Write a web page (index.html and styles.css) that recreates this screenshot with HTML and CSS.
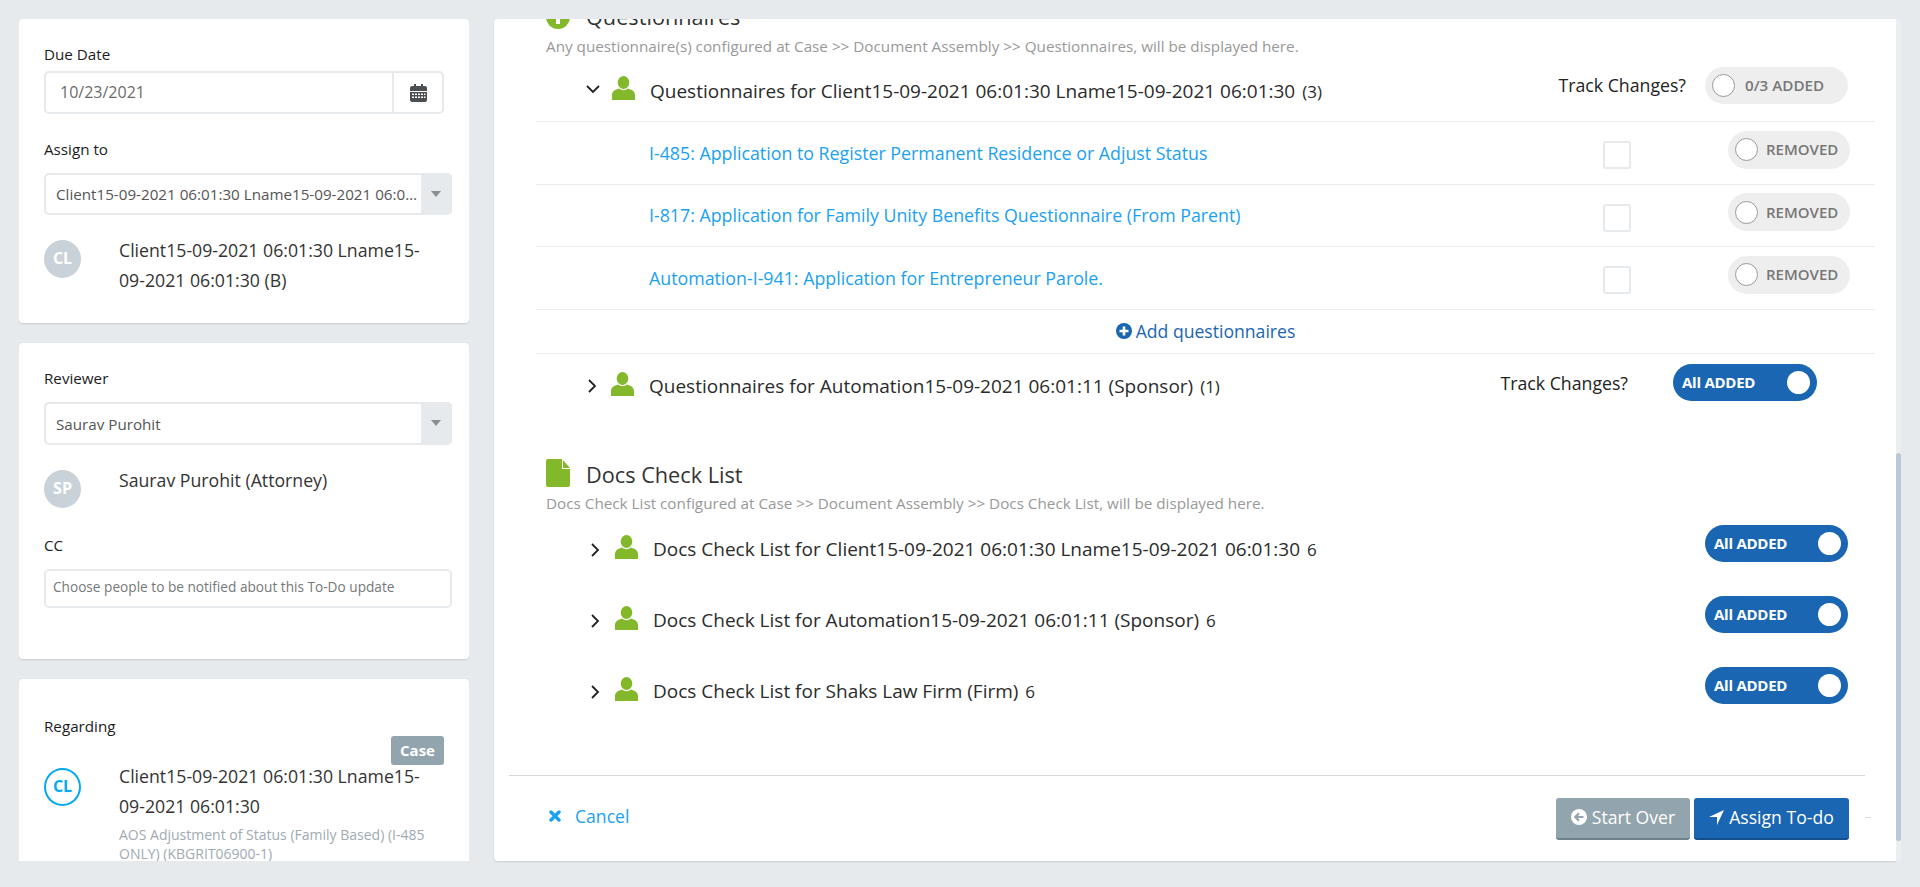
FILE: index.html
```html
<!DOCTYPE html>
<html lang="en">
<head>
<meta charset="utf-8">
<title>Assign To-do</title>
<link rel="stylesheet" href="styles.css">
</head>
<body>
<div class="page">
  <aside class="side">
    <section class="card card-due">
      <label class="label">Due Date</label>
      <div class="date-input">
        <span class="date-value">10/23/2021</span>
        <span class="date-btn">
          <svg width="17" height="18" viewBox="0 0 17 18"><path fill="#4a4f54" d="M2 2h2V0h2v2h5V0h2v2h2a2 2 0 0 1 2 2v3H0V4a2 2 0 0 1 2-2z"/><path fill="#4a4f54" fill-rule="evenodd" d="M0 8h17v8a2 2 0 0 1-2 2H2a2 2 0 0 1-2-2zM2 9.500v1.500h2V9.500zm3 0v1.500h2V9.500zm3 0v1.500h2V9.500zm3 0v1.500h2V9.500zm3 0v1.500h1.500V9.500zM2 12.500V14h2v-1.500zm3 0V14h2v-1.500zm3 0V14h2v-1.500zm3 0V14h2v-1.500zm3 0V14h1.500v-1.500z"/></svg>
        </span>
      </div>
      <label class="label label-assign">Assign to</label>
      <div class="select">
        <span class="select-text">Client15-09-2021 06:01:30 Lname15-09-2021 06:01:30 (B)</span>
        <span class="select-arrow"></span>
      </div>
      <div class="person person-assign">
        <span class="avatar">CL</span>
        <span class="person-name">Client15-09-2021 06:01:30 Lname15-09-2021 06:01:30 (B)</span>
      </div>
    </section>

    <section class="card card-review">
      <label class="label">Reviewer</label>
      <div class="select select-review">
        <span class="select-text">Saurav Purohit</span>
        <span class="select-arrow"></span>
      </div>
      <div class="person person-review">
        <span class="avatar">SP</span>
        <span class="person-name">Saurav Purohit (Attorney)</span>
      </div>
      <label class="label label-cc">CC</label>
      <div class="cc-input">Choose people to be notified about this To-Do update</div>
    </section>

    <section class="card card-regarding">
      <label class="label">Regarding</label>
      <span class="badge">Case</span>
      <div class="person person-regarding">
        <span class="avatar avatar-outline">CL</span>
        <div class="person-body">
          <span class="person-name">Client15-09-2021 06:01:30 Lname15-09-2021 06:01:30</span>
          <p class="person-sub">AOS Adjustment of Status (Family Based) (I-485 ONLY) (KBGRIT06900-1)</p>
        </div>
      </div>
    </section>
  </aside>

  <main class="panel">
    <div class="panel-scroll">
      <div class="content">
        <div class="heading heading-q">
          <svg class="heading-icon" width="24" height="24" viewBox="0 0 24 24"><circle cx="12" cy="12" r="12" fill="#84b82b"/><rect x="10" y="5" width="4" height="14" fill="#fff"/></svg>
          <span>Questionnaires</span>
        </div>
        <p class="sub">Any questionnaire(s) configured at Case &gt;&gt; Document Assembly &gt;&gt; Questionnaires, will be displayed here.</p>

        <div class="row row-open">
          <svg class="chev chev-down" width="14" height="9" viewBox="0 0 14 9"><path d="M1 1l6 6 6-6" fill="none" stroke="#222" stroke-width="1.800"/></svg>
          <svg class="user" width="23" height="24" viewBox="0 0 23 24"><use href="#user"/></svg>
          <span class="row-title">Questionnaires for Client15-09-2021 06:01:30 Lname15-09-2021 06:01:30 <small>(3)</small></span>
          <span class="track">Track Changes?</span>
          <span class="toggle toggle-off toggle-head"><i></i><b>0/3 ADDED</b></span>
        </div>

        <div class="item">
          <a class="item-link">I-485: Application to Register Permanent Residence or Adjust Status</a>
          <span class="check"></span>
          <span class="toggle toggle-off toggle-item"><i></i><b>REMOVED</b></span>
        </div>
        <div class="item">
          <a class="item-link">I-817: Application for Family Unity Benefits Questionnaire (From Parent)</a>
          <span class="check"></span>
          <span class="toggle toggle-off toggle-item"><i></i><b>REMOVED</b></span>
        </div>
        <div class="item">
          <a class="item-link">Automation-I-941: Application for Entrepreneur Parole.</a>
          <span class="check"></span>
          <span class="toggle toggle-off toggle-item"><i></i><b>REMOVED</b></span>
        </div>

        <div class="add-row">
          <svg width="16" height="16" viewBox="0 0 16 16"><circle cx="8" cy="8" r="8" fill="#1a66b2"/><path d="M8 3.500v9M3.500 8h9" stroke="#fff" stroke-width="2.600"/></svg>
          <span>Add questionnaires</span>
        </div>

        <div class="row row-sponsor">
          <svg class="chev chev-right" width="9" height="14" viewBox="0 0 9 14"><path d="M1 1l6 6-6 6" fill="none" stroke="#222" stroke-width="1.800"/></svg>
          <svg class="user" width="23" height="24" viewBox="0 0 23 24"><use href="#user"/></svg>
          <span class="row-title">Questionnaires for Automation15-09-2021 06:01:11 (Sponsor) <small>(1)</small></span>
          <span class="track">Track Changes?</span>
          <span class="toggle toggle-on"><b>All ADDED</b><i></i></span>
        </div>

        <div class="heading heading-docs">
          <svg class="heading-icon" width="24" height="28" viewBox="0 0 24 28"><path fill="#84b82b" d="M0 2a2 2 0 0 1 2-2h14v10h8v16a2 2 0 0 1-2 2H2a2 2 0 0 1-2-2z"/><path fill="#84b82b" d="M17 1v8h7z"/></svg>
          <span>Docs Check List</span>
        </div>
        <p class="sub sub-docs">Docs Check List configured at Case &gt;&gt; Document Assembly &gt;&gt; Docs Check List, will be displayed here.</p>

        <div class="doc-list">
          <div class="row row-doc">
            <svg class="chev chev-right" width="9" height="14" viewBox="0 0 9 14"><path d="M1 1l6 6-6 6" fill="none" stroke="#222" stroke-width="1.800"/></svg>
            <svg class="user" width="23" height="24" viewBox="0 0 23 24"><use href="#user"/></svg>
            <span class="row-title">Docs Check List for Client15-09-2021 06:01:30 Lname15-09-2021 06:01:30 <small>6</small></span>
            <span class="toggle toggle-on toggle-doc"><b>All ADDED</b><i></i></span>
          </div>
          <div class="row row-doc">
            <svg class="chev chev-right" width="9" height="14" viewBox="0 0 9 14"><path d="M1 1l6 6-6 6" fill="none" stroke="#222" stroke-width="1.800"/></svg>
            <svg class="user" width="23" height="24" viewBox="0 0 23 24"><use href="#user"/></svg>
            <span class="row-title">Docs Check List for Automation15-09-2021 06:01:11 (Sponsor) <small>6</small></span>
            <span class="toggle toggle-on toggle-doc"><b>All ADDED</b><i></i></span>
          </div>
          <div class="row row-doc">
            <svg class="chev chev-right" width="9" height="14" viewBox="0 0 9 14"><path d="M1 1l6 6-6 6" fill="none" stroke="#222" stroke-width="1.800"/></svg>
            <svg class="user" width="23" height="24" viewBox="0 0 23 24"><use href="#user"/></svg>
            <span class="row-title">Docs Check List for Shaks Law Firm (Firm) <small>6</small></span>
            <span class="toggle toggle-on toggle-doc"><b>All ADDED</b><i></i></span>
          </div>
        </div>
      </div>
    </div>

    <footer class="footer">
      <a class="cancel">
        <svg width="12" height="12" viewBox="0 0 12 12"><path d="M2 2l8 8M10 2l-8 8" stroke="#1ba1f2" stroke-width="3.400" stroke-linecap="round"/></svg>
        <span>Cancel</span>
      </a>
      <div class="actions">
        <span class="btn btn-grey">
          <svg width="16" height="16" viewBox="0 0 16 16"><circle cx="8" cy="8" r="8" fill="#fff"/><path d="M12.500 8H5M8 4.300L4.300 8 8 11.700" fill="none" stroke="#92a4ad" stroke-width="2.200"/></svg>
          Start Over
        </span>
        <span class="btn btn-blue">
          <svg width="15" height="15" viewBox="0 0 15 15"><path fill="#fff" d="M15 0L8 15V7H0z"/></svg>
          Assign To-do
        </span>
      </div>
      <span class="dash"></span>
    </footer>
  </main>

  <div class="scrollbar"><span class="thumb"></span></div>
</div>

<svg class="defs" width="0" height="0">
  <symbol id="user" viewBox="0 0 23 24">
    <ellipse cx="11.500" cy="6.500" rx="5.800" ry="6.500" fill="#84b82b"/>
    <path fill="#84b82b" d="M0 24v-5c0-3.500 3-5.500 7.500-6.500 1.500 2.300 6.500 2.300 8 0 4.500 1 7.500 3 7.500 6.500v5z"/>
  </symbol>
</svg>
</body>
</html>
```

FILE: styles.css
```css
* { box-sizing: border-box; }

html, body {
  margin: 0;
  height: 887px;
  overflow: hidden;
}

body {
  background: #e6eaed;
  font-family: "Open Sans", "Liberation Sans", sans-serif;
  color: #333;
}

.defs { display: block; height: 0; }

.page {
  display: flex;
  height: 887px;
  padding: 19px 0 26px 19px;
}

/* ---------- left column ---------- */
.side {
  width: 450px;
  flex: none;
  display: flex;
  flex-direction: column;
  gap: 20px;
  overflow: hidden;
  margin-right: 25px;
}

.card {
  position: relative;
  flex: none;
  background: #fff;
  border-radius: 4px;
  box-shadow: 0 1px 2px rgba(0, 0, 0, .12);
  padding: 0 25px;
}

.card-due { height: 304px; padding-top: 25px; }
.card-review { height: 316px; padding-top: 25px; }
.card-regarding { height: 190px; padding-top: 37px; border-radius: 4px 4px 0 0; }

.label {
  display: block;
  font-size: 15.200px;
  line-height: 20px;
  font-weight: 500;
  color: #1c1c1c;
}

.label-assign { margin-top: 25px; }
.label-cc { margin-top: 27px; }

.date-input {
  display: flex;
  height: 43px;
  width: 400px;
  margin-top: 7px;
  border: 2px solid #e6eaed;
  border-radius: 5px;
}

.date-value {
  flex: 1;
  padding-left: 14px;
  font-size: 16px;
  line-height: 39px;
  color: #6c6c6c;
}

.date-btn {
  width: 50px;
  display: flex;
  align-items: center;
  justify-content: center;
  border-left: 2px solid #e6eaed;
}

.select {
  display: flex;
  height: 42px;
  width: 408px;
  margin-top: 14px;
  border: 2px solid #e6eaed;
  border-right: 0;
  border-radius: 5px;
}

.select-review { height: 43px; margin-top: 14px; }
.select-review .select-text { line-height: 41px; }

.select-text {
  flex: 1;
  min-width: 0;
  padding-left: 10px;
  font-size: 15.200px;
  line-height: 38px;
  color: #555;
  white-space: nowrap;
  overflow: hidden;
  text-overflow: ellipsis;
}

.select-arrow {
  position: relative;
  flex: none;
  width: 31px;
  background: #e6eaed;
}

.select-arrow::after {
  content: "";
  position: absolute;
  left: 10px;
  top: 16px;
  border: 5px solid transparent;
  border-top: 6px solid #8a8f94;
  border-bottom: 0;
}

.person { display: flex; align-items: flex-start; }
.person-assign { margin-top: 25px; }
.person-review { margin-top: 25px; }
.person-regarding { margin-top: 24px; }

.avatar {
  flex: none;
  width: 37px;
  height: 38px;
  border-radius: 50%;
  background: #c9d2d8;
  color: #fff;
  font-size: 16px;
  font-weight: 700;
  line-height: 37px;
  text-align: center;
}

.avatar-outline {
  margin-top: 8px;
  background: #fff;
  border: 2px solid #03a9f4;
  color: #03a9f4;
  line-height: 33px;
}

.person-name {
  display: block;
  font-size: 17.700px;
  line-height: 30px;
  color: #333;
  margin-left: 38px;
  margin-top: -5px;
  width: 312px;
}

.person-body { margin-left: 38px; }
.person-body .person-name { margin: 1px 0 0; }

.person-sub {
  margin: 4px 0 0;
  width: 312px;
  font-size: 14px;
  line-height: 19px;
  color: #a0aab2;
}

.cc-input {
  width: 408px;
  height: 39px;
  margin-top: 14px;
  padding-left: 7px;
  border: 2px solid #e6eaed;
  border-radius: 5px;
  font-size: 13.650px;
  line-height: 31px;
  color: #777;
}

.badge {
  position: absolute;
  left: 372px;
  top: 57px;
  width: 53px;
  height: 29px;
  border-radius: 3px;
  background: #92a4ad;
  color: #fff;
  font-size: 15px;
  font-weight: 700;
  line-height: 28px;
  text-align: center;
}

/* ---------- main panel ---------- */
.panel {
  width: 1402px;
  flex: none;
  display: flex;
  flex-direction: column;
  background: #fff;
  border-radius: 4px 0 0 4px;
  box-shadow: 0 1px 2px rgba(0, 0, 0, .12);
}

.panel-scroll {
  flex: 1;
  min-height: 0;
  overflow: hidden;
}

.content {
  margin: -16px 21px 0 42px;
}

.heading {
  display: flex;
  align-items: center;
  height: 28px;
  padding-left: 10px;
  font-size: 21.700px;
  color: #333;
}

.heading-q span { margin-top: -2px; }
.heading-docs span { margin-top: 2px; }

.heading-icon { flex: none; margin-right: 16px; }

.heading-docs { margin-top: 38.500px; }

.sub {
  margin: 6px 0 0;
  padding-left: 10px;
  font-size: 15.250px;
  line-height: 18px;
  color: #999;
  height: 18px;
  white-space: nowrap;
}

.sub-docs { margin-top: 7px; }

.row {
  display: flex;
  align-items: center;
}

.row-open {
  height: 67px;
  padding: 0 27px 6px 50px;
  border-bottom: 1px solid #e9ebed;
}

.row-sponsor {
  height: 67px;
  padding: 0 58px 9px 52px;
}

.chev { flex: none; }
.chev-down { margin-top: 8px; margin-right: 12px; }
.chev-right { margin-right: 14px; margin-top: 6px; }

.user { flex: none; margin-top: 6px; }
.row-sponsor .user { margin-top: 2px; }

.row-title {
  flex: 1;
  font-size: 19px;
  line-height: 24px;
  color: #2b2b2b;
  margin-left: 15px;
  margin-top: 12px;
}

.row-sponsor .row-title { margin-top: 8px; }

.row-title small { font-size: 17px; margin-left: 2px; }

.track {
  font-size: 17.700px;
  font-weight: 500;
  color: #222;
  margin-right: 19px;
}

.row-sponsor .track { margin-right: 45px; }

.toggle {
  flex: none;
  display: flex;
  align-items: center;
  height: 37px;
  border-radius: 19px;
  font-size: 15px;
}

.toggle i {
  flex: none;
  width: 23px;
  height: 23px;
  border-radius: 50%;
  background: #fff;
}

.toggle b { font-weight: 600; white-space: nowrap; margin-top: -1px; }

.toggle-off {
  background: #eee;
  color: #777;
  padding-left: 7px;
}

.toggle-off i { border: 1px solid #999; }
.toggle-off b { margin-left: 10px; font-size: 15.200px; }

.toggle-head { width: 143px; }
.toggle-item { width: 122px; height: 38px; }
.toggle-item b { margin-left: 8px; font-size: 15px; }

.toggle-on {
  width: 144px;
  background: #1a66b2;
  color: #fff;
  padding: 0 7px 0 9px;
  justify-content: space-between;
  letter-spacing: -.25px;
}

.toggle-on b { font-weight: 700; }

.toggle-doc { width: 143px; }

.item {
  display: flex;
  align-items: center;
  height: 62.500px;
  padding: 0 25px 0 113px;
  border-bottom: 1px solid #e9ebed;
}

.item-link {
  flex: 1;
  font-size: 17.800px;
  color: #1ba1f2;
}

.check {
  flex: none;
  width: 28px;
  height: 28px;
  margin-top: 5px;
  margin-right: 97px;
  border: 2px solid #e6eaed;
  border-radius: 3px;
}

.toggle-item { margin-bottom: 6px; }

.add-row {
  display: flex;
  align-items: center;
  justify-content: center;
  gap: 4px;
  height: 44px;
  border-bottom: 1px solid #e9ebed;
  font-size: 17.600px;
  color: #1a66b2;
}

.doc-list { margin-top: -1px; }

.row-doc {
  height: 71px;
  padding: 0 27px 6px 55px;
}

.row-doc .chev { margin-right: 15px; margin-top: 12px; }

/* ---------- footer ---------- */
.footer {
  position: relative;
  flex: none;
  display: flex;
  align-items: center;
  justify-content: space-between;
  height: 86px;
  margin: 0 31px 0 15px;
  padding: 1px 16px 0 40px;
  border-top: 1px solid #d5d7d9;
}

.cancel {
  display: flex;
  align-items: center;
  gap: 14px;
  font-size: 17.600px;
  color: #1ba1f2;
  margin-bottom: 6px;
}

.actions { display: flex; gap: 4px; }

.btn {
  display: flex;
  align-items: center;
  justify-content: center;
  gap: 5px;
  height: 42px;
  padding-bottom: 2px;
  border-radius: 3px;
  border-bottom: 2px solid;
  font-size: 17.600px;
  color: #fff;
}

.btn-grey { width: 134px; background: #92a4ad; border-color: #6f838d; }
.btn-blue { width: 155px; background: #1a66b2; border-color: #154f8c; }

.dash {
  position: absolute;
  right: -6px;
  top: 41px;
  width: 6px;
  height: 1px;
  background: #ddd;
}

/* ---------- scrollbar ---------- */
.scrollbar {
  position: relative;
  flex: none;
  width: 5px;
  background: #eceff2;
  border-radius: 0 4px 4px 0;
}

.thumb {
  position: absolute;
  left: 0;
  right: 0;
  top: 434px;
  height: 388px;
  border-radius: 3px;
  background: #bcc7d6;
}
```
